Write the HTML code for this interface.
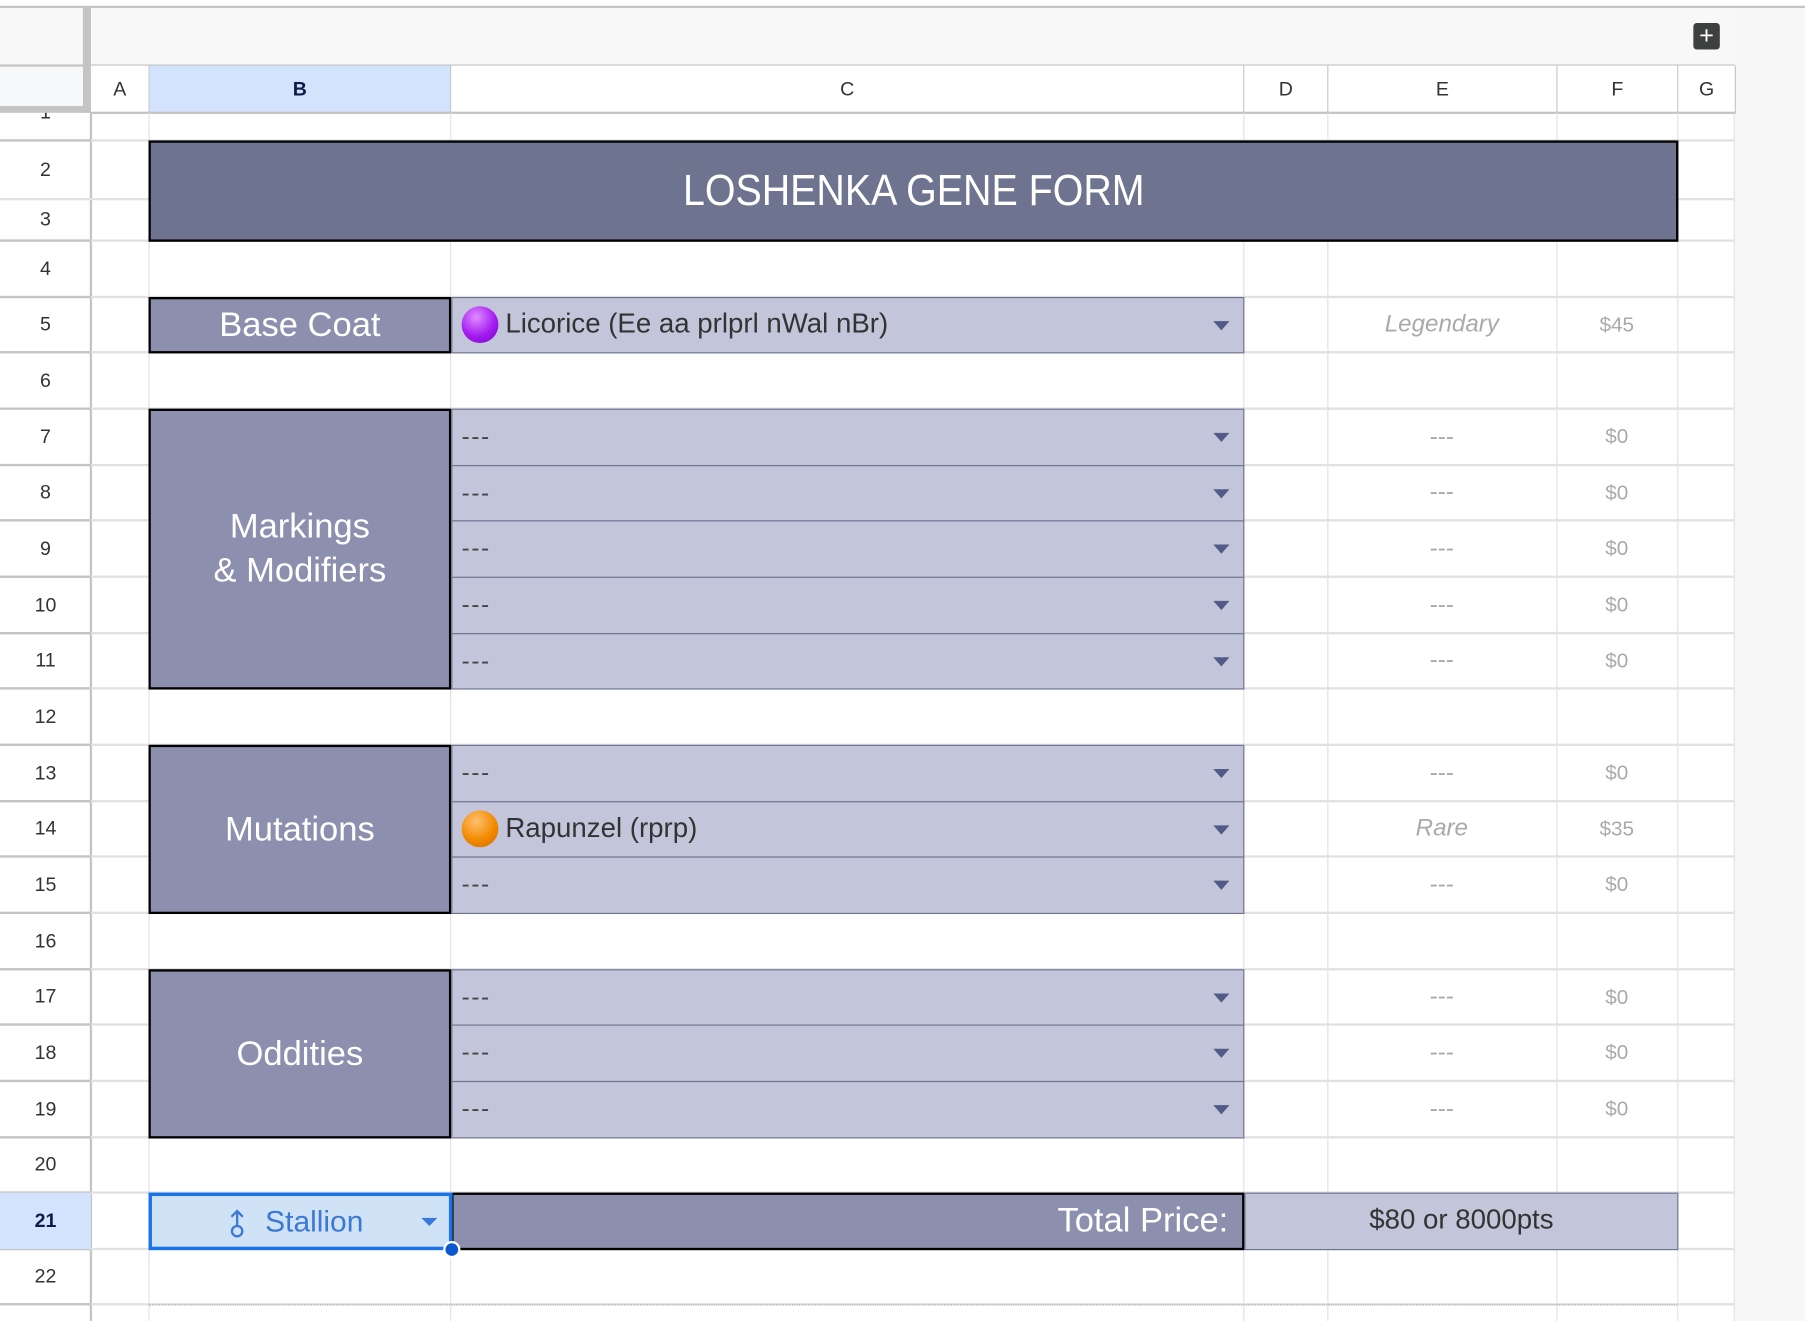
<!DOCTYPE html>
<html><head><meta charset="utf-8">
<style>
html,body{margin:0;padding:0;background:#fff;overflow:hidden;}
body{width:1805px;height:1321px;position:relative;}
#s{position:absolute;left:0;top:0;width:1568px;height:1148px;transform:scale(1.15115);transform-origin:0 0;font-family:"Liberation Sans",sans-serif;}
#s div{position:absolute;box-sizing:border-box;}
.h{left:0;width:1507px;height:2px;background:#e1e1e1;}
.hr{left:0;width:79px;height:2px;background:#c4c4c4;}
.v{width:1px;background:#e1e1e1;top:98px;height:1050px;}
.rn{left:0;width:79px;text-align:center;font-size:17px;color:#333;}
.ch{top:57px;height:41px;line-height:41px;text-align:center;font-size:17px;color:#333;border-right:1px solid #c4c4c4;background:#fff;}
.lab{left:129px;width:263px;background:#8c8fae;border:2px solid #000;color:#fff;text-align:center;font-size:30px;}
.dd{left:392px;width:689px;background:#c3c6db;border:1.5px solid #6e7390;font-size:21px;color:#444;padding-left:8px;letter-spacing:1.5px;}
.dd .ar{right:12px;width:0;height:0;border-left:7px solid transparent;border-right:7px solid transparent;border-top:8px solid #535a86;}
.e{left:1153px;width:199px;text-align:center;color:#aaa;font-size:21px;}
.f{left:1352px;width:105px;text-align:center;color:#aaa;font-size:18px;}
.ball{width:32px;height:32px;border-radius:50%;left:8px;}
</style></head><body>
<div id="s">
<div style="left:0;top:0;width:1568px;height:6px;background:#fff"></div>
<div style="left:0;top:5px;width:1568px;height:2px;background:#c4c4c4"></div>
<div style="left:0;top:7px;width:1507px;height:50px;background:#f9f8f8"></div>
<div style="left:1507px;top:7px;width:61px;height:1141px;background:#f6f7f6"></div>
<div style="left:72px;top:7px;width:7px;height:91px;background:#c4c4c4"></div>
<div style="left:0;top:56px;width:1507px;height:2px;background:#c4c4c4"></div>
<div style="left:0;top:58px;width:72px;height:34px;background:#f7f8fa"></div>
<div style="left:0;top:92px;width:79px;height:6px;background:#c4c4c4"></div>
<div style="left:1471px;top:20px;width:23px;height:23px;background:#3e4040;border-radius:3px;color:#fff;font-size:22px;line-height:22px;text-align:center;">+</div>
<div class="ch" style="left:79px;width:51px;">A</div>
<div class="ch" style="left:130px;width:262px;background:#d3e3fd;font-weight:bold;color:#0b1e4a;">B</div>
<div class="ch" style="left:392px;width:689px;">C</div>
<div class="ch" style="left:1081px;width:73px;">D</div>
<div class="ch" style="left:1154px;width:199px;">E</div>
<div class="ch" style="left:1353px;width:105px;">F</div>
<div class="ch" style="left:1458px;width:50px;">G</div>
<div style="left:79px;top:97px;width:1429px;height:2px;background:#c4c4c4"></div>
<div class="v" style="left:78px;background:#c4c4c4;width:2px;"></div>
<div class="v" style="left:129px;"></div>
<div class="v" style="left:391px;"></div>
<div class="v" style="left:1080px;"></div>
<div class="v" style="left:1153px;"></div>
<div class="v" style="left:1352px;"></div>
<div class="v" style="left:1457px;"></div>
<div class="v" style="left:1506px;"></div>
<div class="h" style="top:121px"></div><div class="h" style="top:172px"></div><div class="h" style="top:208px"></div>
<div class="h" style="top:257px"></div><div class="h" style="top:305px"></div><div class="h" style="top:354px"></div>
<div class="h" style="top:403px"></div><div class="h" style="top:451px"></div><div class="h" style="top:500px"></div>
<div class="h" style="top:549px"></div><div class="h" style="top:597px"></div><div class="h" style="top:646px"></div>
<div class="h" style="top:695px"></div><div class="h" style="top:743px"></div><div class="h" style="top:792px"></div>
<div class="h" style="top:841px"></div><div class="h" style="top:889px"></div><div class="h" style="top:938px"></div>
<div class="h" style="top:987px"></div><div class="h" style="top:1035px"></div><div class="h" style="top:1084px"></div>
<div class="h" style="top:1132px"></div>
<div class="hr" style="top:121px"></div><div class="hr" style="top:208px"></div>
<div class="hr" style="top:257px"></div><div class="hr" style="top:305px"></div><div class="hr" style="top:354px"></div>
<div class="hr" style="top:403px"></div><div class="hr" style="top:451px"></div><div class="hr" style="top:500px"></div>
<div class="hr" style="top:549px"></div><div class="hr" style="top:597px"></div><div class="hr" style="top:646px"></div>
<div class="hr" style="top:695px"></div><div class="hr" style="top:743px"></div><div class="hr" style="top:792px"></div>
<div class="hr" style="top:841px"></div><div class="hr" style="top:889px"></div><div class="hr" style="top:938px"></div>
<div class="hr" style="top:987px"></div><div class="hr" style="top:1035px"></div><div class="hr" style="top:1084px"></div>
<div class="hr" style="top:1132px"></div>
<div style="left:129px;top:1133px;width:1328px;height:0;border-top:1px dotted #aaa"></div>
<div class="rn" style="top:98px;height:8px;line-height:0px;overflow:hidden">1</div>
<div class="rn" style="top:122px;height:51px;line-height:51px">2</div>
<div class="rn" style="top:173px;height:36px;line-height:36px">3</div>
<div class="rn" style="top:209px;height:49px;line-height:49px">4</div>
<div class="rn" style="top:258px;height:48px;line-height:48px">5</div>
<div class="rn" style="top:306px;height:49px;line-height:49px">6</div>
<div class="rn" style="top:355px;height:49px;line-height:49px">7</div>
<div class="rn" style="top:404px;height:48px;line-height:48px">8</div>
<div class="rn" style="top:452px;height:49px;line-height:49px">9</div>
<div class="rn" style="top:501px;height:49px;line-height:49px">10</div>
<div class="rn" style="top:550px;height:48px;line-height:48px">11</div>
<div class="rn" style="top:598px;height:49px;line-height:49px">12</div>
<div class="rn" style="top:647px;height:49px;line-height:49px">13</div>
<div class="rn" style="top:696px;height:48px;line-height:48px">14</div>
<div class="rn" style="top:744px;height:49px;line-height:49px">15</div>
<div class="rn" style="top:793px;height:49px;line-height:49px">16</div>
<div class="rn" style="top:842px;height:48px;line-height:48px">17</div>
<div class="rn" style="top:890px;height:49px;line-height:49px">18</div>
<div class="rn" style="top:939px;height:49px;line-height:49px">19</div>
<div class="rn" style="top:988px;height:48px;line-height:48px">20</div>
<div class="rn" style="top:1036px;height:49px;line-height:49px;background:#d3e3fd;font-weight:bold;color:#0b1e4a">21</div>
<div class="rn" style="top:1085px;height:48px;line-height:48px">22</div>
<div style="left:129px;top:122px;width:1329px;height:88px;background:#6e7390;border:2px solid #000;color:#fff;text-align:center;font-size:38px;line-height:84px;"><span style="display:inline-block;transform:scaleX(0.9)">LOSHENKA GENE FORM</span></div>
<div class="lab" style="top:258px;height:49px;line-height:45px;">Base Coat</div>
<div class="lab" style="top:355px;height:244px;padding-top:82px;line-height:38px;">Markings<br>&amp; Modifiers</div>
<div class="lab" style="top:647px;height:147px;line-height:143px;">Mutations</div>
<div class="lab" style="top:842px;height:147px;line-height:143px;">Oddities</div>
<div class="dd" style="top:258px;height:49px;line-height:46px;padding-left:46px;font-size:24px;color:#333;letter-spacing:0"><div class="ball" style="top:7px;background:radial-gradient(circle at 40% 30%,#e08cff,#a31cf0 55%,#7a00c8)"></div>Licorice (Ee aa prlprl nWal nBr)<div class="ar" style="top:20px"></div></div>
<div class="dd" style="top:355px;height:50px;line-height:48px">---<div class="ar" style="top:20px"></div></div>
<div class="dd" style="top:404px;height:49px;line-height:48px">---<div class="ar" style="top:20px"></div></div>
<div class="dd" style="top:452px;height:50px;line-height:48px">---<div class="ar" style="top:20px"></div></div>
<div class="dd" style="top:501px;height:50px;line-height:48px">---<div class="ar" style="top:20px"></div></div>
<div class="dd" style="top:550px;height:49px;line-height:48px">---<div class="ar" style="top:20px"></div></div>
<div class="dd" style="top:647px;height:50px;line-height:48px">---<div class="ar" style="top:20px"></div></div>
<div class="dd" style="top:696px;height:49px;line-height:46px;padding-left:46px;font-size:24px;color:#333;letter-spacing:0"><div class="ball" style="top:7px;background:radial-gradient(circle at 40% 30%,#ffc070,#f28a00 55%,#d86a00)"></div>Rapunzel (rprp)<div class="ar" style="top:20px"></div></div>
<div class="dd" style="top:744px;height:50px;line-height:48px">---<div class="ar" style="top:20px"></div></div>
<div class="dd" style="top:842px;height:49px;line-height:48px">---<div class="ar" style="top:20px"></div></div>
<div class="dd" style="top:890px;height:50px;line-height:48px">---<div class="ar" style="top:20px"></div></div>
<div class="dd" style="top:939px;height:50px;line-height:48px">---<div class="ar" style="top:20px"></div></div>
<div class="e" style="top:258px;line-height:48px;font-style:italic">Legendary</div><div class="f" style="top:258px;line-height:48px">$45</div>
<div class="e" style="top:355px;line-height:49px">---</div><div class="f" style="top:355px;line-height:49px">$0</div>
<div class="e" style="top:404px;line-height:48px">---</div><div class="f" style="top:404px;line-height:48px">$0</div>
<div class="e" style="top:452px;line-height:49px">---</div><div class="f" style="top:452px;line-height:49px">$0</div>
<div class="e" style="top:501px;line-height:49px">---</div><div class="f" style="top:501px;line-height:49px">$0</div>
<div class="e" style="top:550px;line-height:48px">---</div><div class="f" style="top:550px;line-height:48px">$0</div>
<div class="e" style="top:647px;line-height:49px">---</div><div class="f" style="top:647px;line-height:49px">$0</div>
<div class="e" style="top:696px;line-height:48px;font-style:italic">Rare</div><div class="f" style="top:696px;line-height:48px">$35</div>
<div class="e" style="top:744px;line-height:49px">---</div><div class="f" style="top:744px;line-height:49px">$0</div>
<div class="e" style="top:842px;line-height:48px">---</div><div class="f" style="top:842px;line-height:48px">$0</div>
<div class="e" style="top:890px;line-height:49px">---</div><div class="f" style="top:890px;line-height:49px">$0</div>
<div class="e" style="top:939px;line-height:49px">---</div><div class="f" style="top:939px;line-height:49px">$0</div>
<div style="left:392px;top:1036px;width:689px;height:50px;background:#8c8fae;border:2px solid #000;color:#fff;text-align:right;padding-right:12px;font-size:30px;line-height:46px;">Total Price:</div>
<div style="left:1081px;top:1036px;width:377px;height:50px;background:#c3c6db;border:1.5px solid #6e7390;color:#333;text-align:center;font-size:24px;line-height:46px;">$80 or 8000pts</div>
<div style="left:129px;top:1036px;width:264px;height:50px;background:#d0e2f5;border:3px solid #1a73e8;color:#3c78d8;text-align:center;font-size:26px;line-height:44px;">
<svg style="position:absolute;left:66px;top:10px" width="16" height="27" viewBox="0 0 16 27"><path d="M8 16V3M3 8L8 3L13 8" stroke="#3c78d8" stroke-width="2" fill="none"/><circle cx="8" cy="20.5" r="4.5" stroke="#3c78d8" stroke-width="2" fill="none"/></svg>
<span style="position:relative;left:12px">Stallion</span>
<div style="right:10px;top:19px;width:0;height:0;border-left:7px solid transparent;border-right:7px solid transparent;border-top:7px solid #3c78d8"></div>
</div>
<div style="left:385px;top:1078px;width:15px;height:15px;border-radius:50%;background:#0b57d0;border:2px solid #fff"></div>
</div>
</body></html>
